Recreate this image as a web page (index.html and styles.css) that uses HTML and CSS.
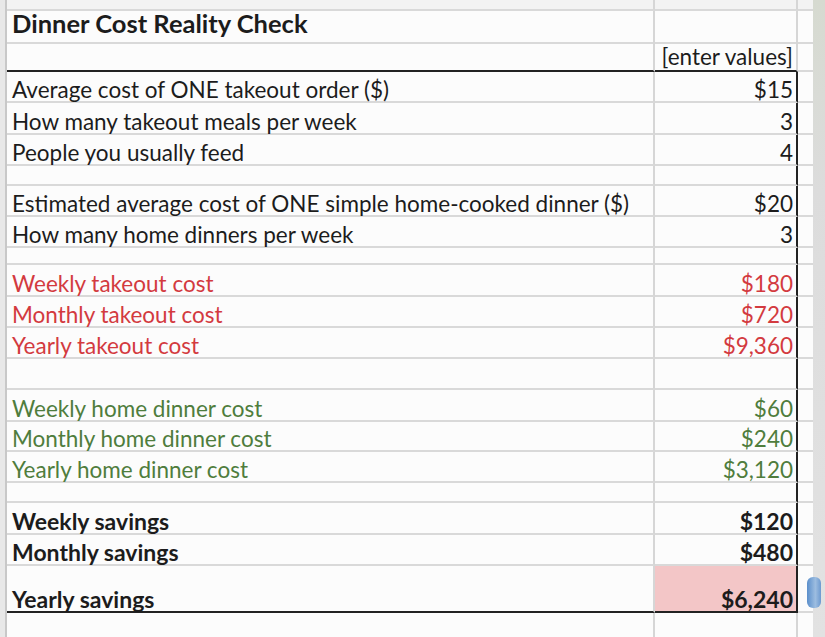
FILE: index.html
```html
<!DOCTYPE html>
<html>
<head>
<meta charset="utf-8">
<title>Dinner Cost Reality Check</title>
<link rel="stylesheet" href="styles.css">
</head>
<body>
<div class="screen">
  <div class="gutter"></div>
  <div class="sheet">
    <div class="row h11"><div class="c lab"></div><div class="c val"></div><div class="c ext"></div></div>
    <div class="row h31 title-row"><div class="c lab title">Dinner Cost Reality Check</div><div class="c val"></div><div class="c ext"></div></div>
    <div class="row h30 box-top"><div class="c lab"></div><div class="c val">[enter values]</div><div class="c ext"></div></div>

    <div class="row h31 in"><div class="c lab">Average cost of ONE takeout order ($)</div><div class="c val">$15</div><div class="c ext"></div></div>
    <div class="row h32 in"><div class="c lab">How many takeout meals per week</div><div class="c val">3</div><div class="c ext"></div></div>
    <div class="row h31 in"><div class="c lab">People you usually feed</div><div class="c val">4</div><div class="c ext"></div></div>
    <div class="row h20 in"><div class="c lab"></div><div class="c val"></div><div class="c ext"></div></div>
    <div class="row h31 in"><div class="c lab">Estimated average cost of ONE simple home-cooked dinner ($)</div><div class="c val">$20</div><div class="c ext"></div></div>
    <div class="row h31 in"><div class="c lab">How many home dinners per week</div><div class="c val">3</div><div class="c ext"></div></div>
    <div class="row h17 in"><div class="c lab"></div><div class="c val"></div><div class="c ext"></div></div>

    <div class="row h32 in red"><div class="c lab">Weekly takeout cost</div><div class="c val">$180</div><div class="c ext"></div></div>
    <div class="row h31 in red"><div class="c lab">Monthly takeout cost</div><div class="c val">$720</div><div class="c ext"></div></div>
    <div class="row h31 in red"><div class="c lab">Yearly takeout cost</div><div class="c val">$9,360</div><div class="c ext"></div></div>
    <div class="row h31 in"><div class="c lab"></div><div class="c val"></div><div class="c ext"></div></div>

    <div class="row h32 in green"><div class="c lab">Weekly home dinner cost</div><div class="c val">$60</div><div class="c ext"></div></div>
    <div class="row h30 in green"><div class="c lab">Monthly home dinner cost</div><div class="c val">$240</div><div class="c ext"></div></div>
    <div class="row h31 in green"><div class="c lab">Yearly home dinner cost</div><div class="c val">$3,120</div><div class="c ext"></div></div>
    <div class="row h20 in"><div class="c lab"></div><div class="c val"></div><div class="c ext"></div></div>

    <div class="row h32 in bold"><div class="c lab">Weekly savings</div><div class="c val">$120</div><div class="c ext"></div></div>
    <div class="row h31 in bold"><div class="c lab">Monthly savings</div><div class="c val">$480</div><div class="c ext"></div></div>
    <div class="row h47 in bold box-bottom"><div class="c lab">Yearly savings</div><div class="c val pink">$6,240</div><div class="c ext"></div></div>

    <div class="row h24 last"><div class="c lab"></div><div class="c val"></div><div class="c ext"></div></div>
  </div>
  <div class="side"></div>
  <div class="paste-btn"></div>
</div>
</body>
</html>
```

FILE: styles.css
```css
* { box-sizing: border-box; }
html, body { margin: 0; padding: 0; background: #fbfbfb; }
body {
  width: 825px;
  height: 637px;
  overflow: hidden;
  font-family: Lato, "Open Sans", sans-serif;
  font-size: 22.5px;
  color: #1c1c1c;
}
.screen {
  position: relative;
  display: flex;
  width: 825px;
  height: 637px;
}
.gutter {
  width: 7px;
  flex: none;
  background: #e8e8e8;
  border-right: 2px solid #c8c8c8;
}
.sheet {
  width: 806px;
  flex: none;
  display: flex;
  flex-direction: column;
  background: #fcfcfc;
}
.side {
  flex: 1;
  background: linear-gradient(#d6dad0, #dcdcdc 30%, #e2e2e2);
}
.row {
  display: grid;
  grid-template-columns: 648px 143px 15px;
  flex: none;
}
.c {
  display: flex;
  align-items: flex-end;
  line-height: 1;
  white-space: nowrap;
  border-bottom: 2px solid #d9d9d9;
  padding-bottom: 0;
}
.lab {
  padding-left: 5px;
  border-right: 2px solid #d6d6d6;
}
.val {
  justify-content: flex-end;
  padding-right: 3px;
  border-right: 2px solid #d6d6d6;
}
.h11 { height: 11px; }
.h17 { height: 17px; }
.h20 { height: 20px; }
.h24 { height: 26px; }
.h30 { height: 30px; }
.h31 { height: 31px; }
.h32 { height: 32px; }
.h47 { height: 47px; }
.h11 .c { background: #f3f3f3; }

.title-row .c { padding-bottom: 5px; }
.title {
  font-weight: 700;
  font-size: 25.5px;
}
.box-top .c { padding-bottom: 2px; }

.box-top .lab, .box-top .val { border-bottom: 2px solid #222; }
.in .val { border-right: 2px solid #222; }
.box-bottom .lab, .box-bottom .val { border-bottom: 2px solid #222; }
.last .c { border-bottom: none; }

.red { color: #d33a3f; }
.green { color: #4f7d3d; }
.bold { font-weight: 700; font-size: 23px; }
.pink { background: #f3c6c7; }

.paste-btn {
  position: absolute;
  left: 807px;
  top: 577px;
  width: 14px;
  height: 31px;
  border-radius: 6px;
  background: linear-gradient(90deg, #5b8fcb, #9dbde0 60%, #6d9ad0);
}
```
